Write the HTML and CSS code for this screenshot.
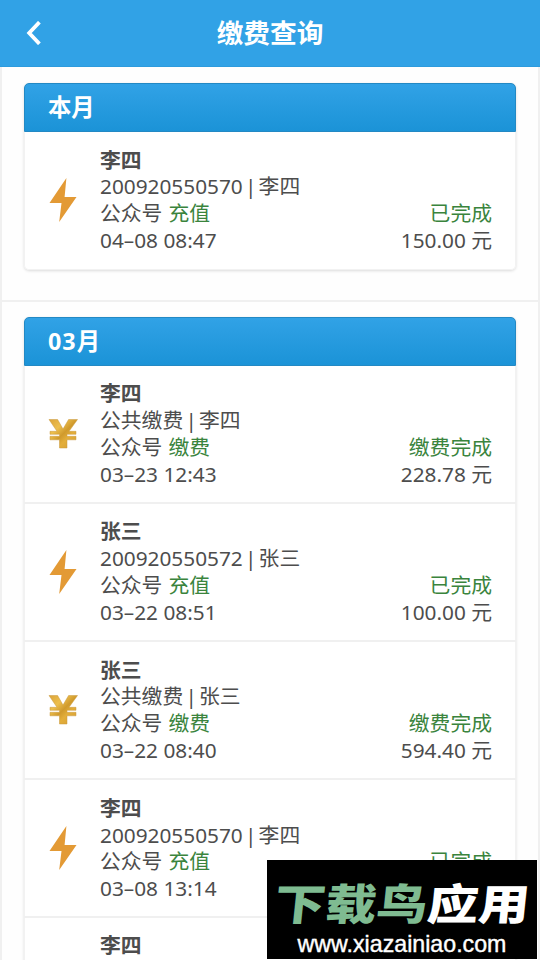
FILE: index.html
```html
<!DOCTYPE html>
<html lang="zh-CN">
<head>
<meta charset="utf-8">
<title>缴费查询</title>
<link rel="stylesheet" href="styles.css">
</head>
<body>
<svg class="defs" width="0" height="0" aria-hidden="true">
  <defs>
    <linearGradient id="gold" x1="0" y1="0" x2="1" y2="1">
      <stop offset="0" stop-color="#dba338"/>
      <stop offset=".3" stop-color="#edbf4e"/>
      <stop offset=".5" stop-color="#d09a2c"/>
      <stop offset=".65" stop-color="#e3ae3a"/>
      <stop offset="1" stop-color="#d29c35"/>
    </linearGradient>
    <symbol id="bolt" viewBox="0 0 30 46"><path d="M18.400 1 1.500 26h12L11.200 45 28.500 20H16.600z" fill="#e39a35"/></symbol>
    <symbol id="yen" viewBox="0 0 30 30"><path d="M1 .500H9.600L15 10 20.600 .500H29.500L21 12.300H28V15.300H19V17.300H28V20.800H19V29H11.500V20.800H2V17.300H11.500V15.300H2V12.300H9Z" fill="url(#gold)" stroke="#c8983c" stroke-width=".5"/></symbol>
  </defs>
</svg>
<div class="screen">
  <header class="topbar">
    <svg class="back" viewBox="0 0 16 24"><path d="M13.400 1.200 3.200 12l10.200 10.800" fill="none" stroke="#fff" stroke-width="3.800"/></svg>
    <h1>缴费查询</h1>
  </header>
  <main>
    <section class="month">
      <div class="card">
        <h2>本月</h2>
        <article class="item">
          <svg class="icon bolt"><use href="#bolt"/></svg>
          <div class="info">
            <div class="name">李四</div>
            <div>200920550570<span class="bar">|</span>李四</div>
            <div class="row"><span>公众号<b class="ok">充值</b></span><span class="ok">已完成</span></div>
            <div class="row"><span class="time">04<i>–</i>08 08:47</span><span>150.00 元</span></div>
          </div>
        </article>
      </div>
    </section>
    <section class="month">
      <div class="card">
        <h2><span class="num">03</span>月</h2>
        <article class="item">
          <svg class="icon yen"><use href="#yen"/></svg>
          <div class="info">
            <div class="name">李四</div>
            <div>公共缴费<span class="bar">|</span>李四</div>
            <div class="row"><span>公众号<b class="ok">缴费</b></span><span class="ok">缴费完成</span></div>
            <div class="row"><span class="time">03<i>–</i>23 12:43</span><span>228.78 元</span></div>
          </div>
        </article>
        <article class="item">
          <svg class="icon bolt"><use href="#bolt"/></svg>
          <div class="info">
            <div class="name">张三</div>
            <div>200920550572<span class="bar">|</span>张三</div>
            <div class="row"><span>公众号<b class="ok">充值</b></span><span class="ok">已完成</span></div>
            <div class="row"><span class="time">03<i>–</i>22 08:51</span><span>100.00 元</span></div>
          </div>
        </article>
        <article class="item">
          <svg class="icon yen"><use href="#yen"/></svg>
          <div class="info">
            <div class="name">张三</div>
            <div>公共缴费<span class="bar">|</span>张三</div>
            <div class="row"><span>公众号<b class="ok">缴费</b></span><span class="ok">缴费完成</span></div>
            <div class="row"><span class="time">03<i>–</i>22 08:40</span><span>594.40 元</span></div>
          </div>
        </article>
        <article class="item">
          <svg class="icon bolt"><use href="#bolt"/></svg>
          <div class="info">
            <div class="name">李四</div>
            <div>200920550570<span class="bar">|</span>李四</div>
            <div class="row"><span>公众号<b class="ok">充值</b></span><span class="ok">已完成</span></div>
            <div class="row"><span class="time">03<i>–</i>08 13:14</span></div>
          </div>
        </article>
        <article class="item last">
          <div class="icon"></div>
          <div class="info">
            <div class="name">李四</div>
          </div>
        </article>
      </div>
    </section>
  </main>
  <div class="watermark">
    <div class="brand"><span>下载鸟</span>应用</div>
    <div class="url">www.xiazainiao.com</div>
  </div>
</div>
</body>
</html>
```
FILE: styles.css
```css
* { box-sizing: border-box; }

body {
  margin: 0;
  background: #fefefe;
  color: #4d4d4d;
  font-family: "Noto Sans", "Noto Sans CJK SC", sans-serif;
  font-size: 20.8px;
}

.defs { position: absolute; }

.screen {
  position: relative;
  height: 960px;
  overflow: hidden;
}

.topbar {
  display: flex;
  align-items: center;
  height: 67px;
  padding: 0 26px;
  background: #31a2e6;
  border-bottom: 1px solid #2d9bdd;
}

.back { width: 16px; height: 24px; }

.topbar h1 {
  flex: 1;
  margin: 0 16px 1px 0;
  color: #fff;
  font-size: 26.7px;
  line-height: 40px;
  font-weight: 700;
  text-align: center;
}

.month {
  padding: 16px 22px 30px;
  border: solid #f0f0f0;
  border-width: 0 2px 2px;
}

.month + .month { padding-top: 14.500px; }

.card {
  border-radius: 5px;
  background: #fff;
  box-shadow: inset 0 0 0 1px #f2f2f2, 0 1px 3px rgba(0, 0, 0, .14);
}

.card h2 {
  height: 49px;
  margin: 0;
  padding: 0 23px;
  border: 1px solid #2389c4;
  border-radius: 5px 5px 0 0;
  background: linear-gradient(#31a2e6, #1b93d7);
  color: #fff;
  font-size: 23.3px;
  line-height: 46px;
  font-weight: 700;
}

.num { letter-spacing: 1px; }

.item {
  display: flex;
  align-items: center;
  height: 138.2px;
  padding: 0 24px;
  border-bottom: 2px solid #f0f0f0;
}

.item:last-child { border-bottom-color: transparent; }

.icon { flex: none; width: 30px; margin-right: 22px; }
.bolt { height: 46px; }
.yen { height: 30px; }

.info {
  flex: 1;
  line-height: 26.8px;
}

.info > div { height: 26.8px; white-space: nowrap; }

.name { font-weight: 700; }
.bar { margin: 0 2.200px; }

.row {
  display: flex;
  justify-content: space-between;
}

.ok { color: #3a843d; font-weight: 400; }
b.ok { margin-left: 6px; }
.time i { font-style: normal; }

.last { align-items: flex-start; padding-top: 14px; }

.watermark {
  position: absolute;
  left: 267px;
  top: 860px;
  width: 270px;
  height: 99px;
  background: #000;
  color: #fff;
  text-align: center;
}

.brand {
  height: 70px;
  padding-top: 8px;
  font-size: 51px;
  line-height: 70px;
  font-weight: 900;
  white-space: nowrap;
  transform: translate(1px, 1px) skewX(-6deg) scaleY(.84);
}

.brand span { color: #7fbb91; }

.url {
  font-family: "Liberation Sans", sans-serif;
  font-size: 23.2px;
  line-height: 29px;
  -webkit-text-stroke: .4px #fff;
}
```
